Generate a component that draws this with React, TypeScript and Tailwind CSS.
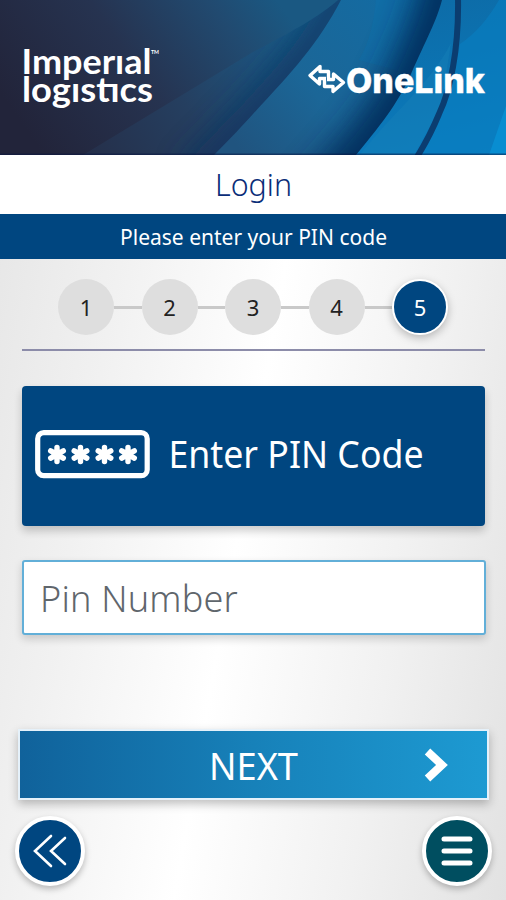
import { useState } from 'react';
import clsx from 'clsx';

const steps = [1, 2, 3, 4, 5];

function HeaderArt() {
  return (
    <svg className="absolute inset-0 h-full w-full" viewBox="0 0 506 155" preserveAspectRatio="none" aria-hidden="true">
      <defs>
        <linearGradient id="base" gradientUnits="userSpaceOnUse" x1="40" y1="150" x2="270" y2="-10">
          <stop offset="0" stopColor="#22243a" />
          <stop offset="0.45" stopColor="#263350" />
          <stop offset="0.8" stopColor="#214a70" />
          <stop offset="1" stopColor="#1a5882" />
        </linearGradient>
        <linearGradient id="fold" gradientUnits="userSpaceOnUse" x1="90" y1="150" x2="320" y2="20">
          <stop offset="0" stopColor="#25304b" />
          <stop offset="0.4" stopColor="#253f60" />
          <stop offset="0.7" stopColor="#1e517a" />
          <stop offset="1" stopColor="#17608e" />
        </linearGradient>
        <linearGradient id="wave" gradientUnits="userSpaceOnUse" x1="240" y1="150" x2="420" y2="0">
          <stop offset="0" stopColor="#20547f" />
          <stop offset="0.4" stopColor="#1b6697" />
          <stop offset="1" stopColor="#126ca4" />
        </linearGradient>
        <linearGradient id="bright" gradientUnits="userSpaceOnUse" x1="440" y1="0" x2="480" y2="155">
          <stop offset="0" stopColor="#0d6ca8" />
          <stop offset="0.5" stopColor="#0b74b3" />
          <stop offset="1" stopColor="#0b7dc0" />
        </linearGradient>
        <filter id="soft" filterUnits="userSpaceOnUse" x="80" y="-80" width="460" height="320">
          <feGaussianBlur stdDeviation="15" />
        </filter>
        <clipPath id="foldClip">
          <path d="M83 155 L253 52 C290 33 320 16 338 0 H350 V155 Z" />
        </clipPath>
        <clipPath id="waveClip">
          <path d="M214 155 C232 137 243 125 253 114 C292 72 318 44 341 0 H506 V155 Z" />
        </clipPath>
      </defs>
      <rect width="506" height="155" fill="url(#base)" />
      <g clipPath="url(#foldClip)">
        <rect width="506" height="155" fill="url(#fold)" />
        <path d="M190 179 L253 114 C292 72 318 44 348 -20" fill="none" stroke="#0d315e" strokeWidth="28" opacity="0.85" filter="url(#soft)" />
      </g>
      <g clipPath="url(#waveClip)">
        <rect width="506" height="155" fill="url(#wave)" />
        <path d="M376 0 C374 20 370 42 359 60 L411 74 L442 0 Z" fill="#0c72ae" opacity="0.35" />
        <path d="M315 202 L356 155 C386 119 400 99 411 74 C426 40 437 20 450 -42" fill="none" stroke="#062c58" strokeWidth="46" opacity="0.92" filter="url(#soft)" />
      </g>
      <path d="M356 155 C386 119 400 99 411 74 C426 40 437 20 442 0 H506 V155 Z" fill="url(#bright)" />
      <path d="M360 155 C390 115 430 85 451 43 L441 106 L414 155 Z" fill="#1680b9" opacity="0.45" />
      <path d="M460 44 C475 34 488 19 499 0 H506 V155 H421 C445 113 455 75 460 44 Z" fill="#087fc1" opacity="0.6" />
      <path d="M506 106 L489 155 H506 Z" fill="#0991d5" opacity="0.8" />
      <path d="M458 -2 C459 50 450 91 439 114 Q430 136 417 157" fill="none" stroke="#0b3d70" strokeWidth="6" />
      <rect y="153.5" width="506" height="1.5" fill="#07143f" opacity="0.5" />
    </svg>
  );
}

function Logos() {
  return (
    <svg className="relative h-full w-full" viewBox="0 0 506 155" fill="#fff">
      <g fontFamily="Lato, sans-serif" fontWeight="700">
        <text x="21.5" y="74" fontSize="33.5" textLength="130" lengthAdjust="spacingAndGlyphs">Imperıal</text>
        <text x="22" y="102" fontSize="33.5" textLength="131" lengthAdjust="spacingAndGlyphs">logıstıcs</text>
        <text x="151" y="53.5" fontSize="6" textLength="8" lengthAdjust="spacingAndGlyphs">TM</text>
      </g>
      {/* two interlocking arrows */}
      <g fill="none" stroke="#fff" strokeWidth="3.4" strokeLinejoin="round">
        <path d="M326 78.5 H319.5 V84 L310 75.5 L320 66.5 V71.5 H328.5 V78.5" />
        <path d="M327 79.5 H333.5 V74 L343.5 82.5 L333 91.5 V86.5 H324.5 V79.5" />
      </g>
      <text x="346" y="92.5" fontFamily="Inter, sans-serif" fontWeight="800" fontSize="34" stroke="#fff" strokeWidth="0.3" textLength="139" lengthAdjust="spacingAndGlyphs">
        OneLink
      </text>
    </svg>
  );
}

function Stepper({ current }: { current: number }) {
  return (
    <div className="flex h-[56px] items-center pr-[36px] pl-[36px]">
      {steps.map((step) => (
        <div key={step} className={clsx('flex items-center', step > 1 && 'flex-1')}>
          {step > 1 && <div className="h-[3px] flex-1 bg-[#c9c9c9]" />}
          <div
            className={clsx(
              'flex size-14 shrink-0 items-center justify-center rounded-full text-[22px]',
              step === current
                ? 'border-2 border-white bg-[#004680] text-white shadow-[0_3px_8px_rgba(0,0,0,0.25)]'
                : 'bg-[#dedede] text-[#222]'
            )}
          >
            {step}
          </div>
        </div>
      ))}
    </div>
  );
}

function PinIcon() {
  return (
    <svg width="116" height="50" viewBox="0 0 116 50" fill="none" stroke="#fff" strokeLinecap="round">
      <rect x="2.7" y="2.7" width="109.5" height="43" rx="6" strokeWidth="5.2" />
      {[22, 45.5, 69.5, 93].map((x) => (
        <g key={x} transform={`translate(${x} 24.5)`} strokeWidth="5.4">
          <path d="M0 -7 V7 M-6.3 -3.7 L6.3 3.7 M-6.3 3.7 L6.3 -3.7" />
        </g>
      ))}
    </svg>
  );
}

export default function App() {
  const [pin, setPin] = useState('');

  return (
    <div className="flex h-[900px] w-[506px] flex-col overflow-hidden bg-[linear-gradient(100deg,#e4e4e4_0%,#f1f1f1_25%,#ffffff_50%,#f1f1f1_76%,#e2e2e2_100%)] font-['Noto_Sans',sans-serif]">
      <header className="relative h-[155px] shrink-0">
        <HeaderArt />
        <Logos />
      </header>

      <div className="flex h-[59px] shrink-0 items-center justify-center bg-white text-[#0a2d78]">
        <svg width="82" height="50" fill="currentColor">
          <text x="3" y="36" fontSize="31" fontWeight="350" textLength="77" lengthAdjust="spacingAndGlyphs">Login</text>
        </svg>
      </div>
      <div className="flex h-[45px] shrink-0 items-center justify-center bg-[#004680] text-white">
        <svg width="280" height="44" fill="currentColor">
          <text x="7" y="30" fontSize="22" textLength="267" lengthAdjust="spacingAndGlyphs">Please enter your PIN code</text>
        </svg>
      </div>

      <main className="flex flex-1 flex-col px-[22px] pt-5">
        <Stepper current={5} />
        <div className="mt-[14px] mr-[-1px] h-[2px] bg-[#8c8ca9]" />

        <div className="mt-[35px] mr-[-1px] flex h-[140px] items-center rounded bg-[#004680] pb-[2px] pl-[13px] text-white shadow-[0_5px_9px_rgba(0,0,0,0.2)]">
          <PinIcon />
          <svg className="ml-4" width="270" height="60" fill="currentColor">
            <text x="1.5" y="43" fontSize="37.5" textLength="255" lengthAdjust="spacingAndGlyphs">Enter PIN Code</text>
          </svg>
        </div>

        <input
          value={pin}
          onChange={(e) => setPin(e.target.value)}
          placeholder="Pin Number"
          className="mt-[34px] h-[75px] w-[464px] rounded-[3px] border-2 border-[#62afd8] bg-white px-4 pt-px text-[36px] font-[350] tracking-[0.2px] text-[#5f666c] shadow-[0_4px_8px_rgba(0,0,0,0.17)] outline-none placeholder:text-[#5f666c]"
        />

        <button className="-mx-1 mt-[94px] flex h-[71px] w-[471px] items-center border-2 border-[#e5f1fa] bg-linear-to-r from-[#10629b] via-[#1781b9] to-[#1d9ad2] text-white shadow-[0_4px_9px_rgba(0,0,0,0.25)]">
          <svg width="467" height="66" viewBox="0 0 467 66" fill="currentColor">
            <text x="189" y="48" fontSize="37.5" textLength="89" lengthAdjust="spacingAndGlyphs">NEXT</text>
            <path d="M407.5 19.5 L422 33 L407.5 46.5" fill="none" stroke="currentColor" strokeWidth="8" />
          </svg>
        </button>

        <div className="-mr-[8px] -ml-[7px] mt-4 flex justify-between">
          <button aria-label="Back" className="flex size-[70px] items-center justify-center rounded-full border-4 border-white bg-[#004680] shadow-[0_3px_6px_rgba(0,0,0,0.25)]">
            <svg width="62" height="62" viewBox="0 0 62 62" fill="none" stroke="#fff" strokeWidth="2.6" strokeLinecap="round">
              <path d="M32 16 L16 31 L32 46 M46 18 L32 31 L46 44" />
            </svg>
          </button>
          <button aria-label="Menu" className="flex size-[70px] items-center justify-center rounded-full border-4 border-white bg-[#004e60] shadow-[0_3px_6px_rgba(0,0,0,0.25)]">
            <svg width="62" height="62" viewBox="0 0 62 62" stroke="#fff" strokeWidth="5" strokeLinecap="round">
              <path d="M18 19 H44 M18 31 H44 M18 43 H44" />
            </svg>
          </button>
        </div>
      </main>
    </div>
  );
}
